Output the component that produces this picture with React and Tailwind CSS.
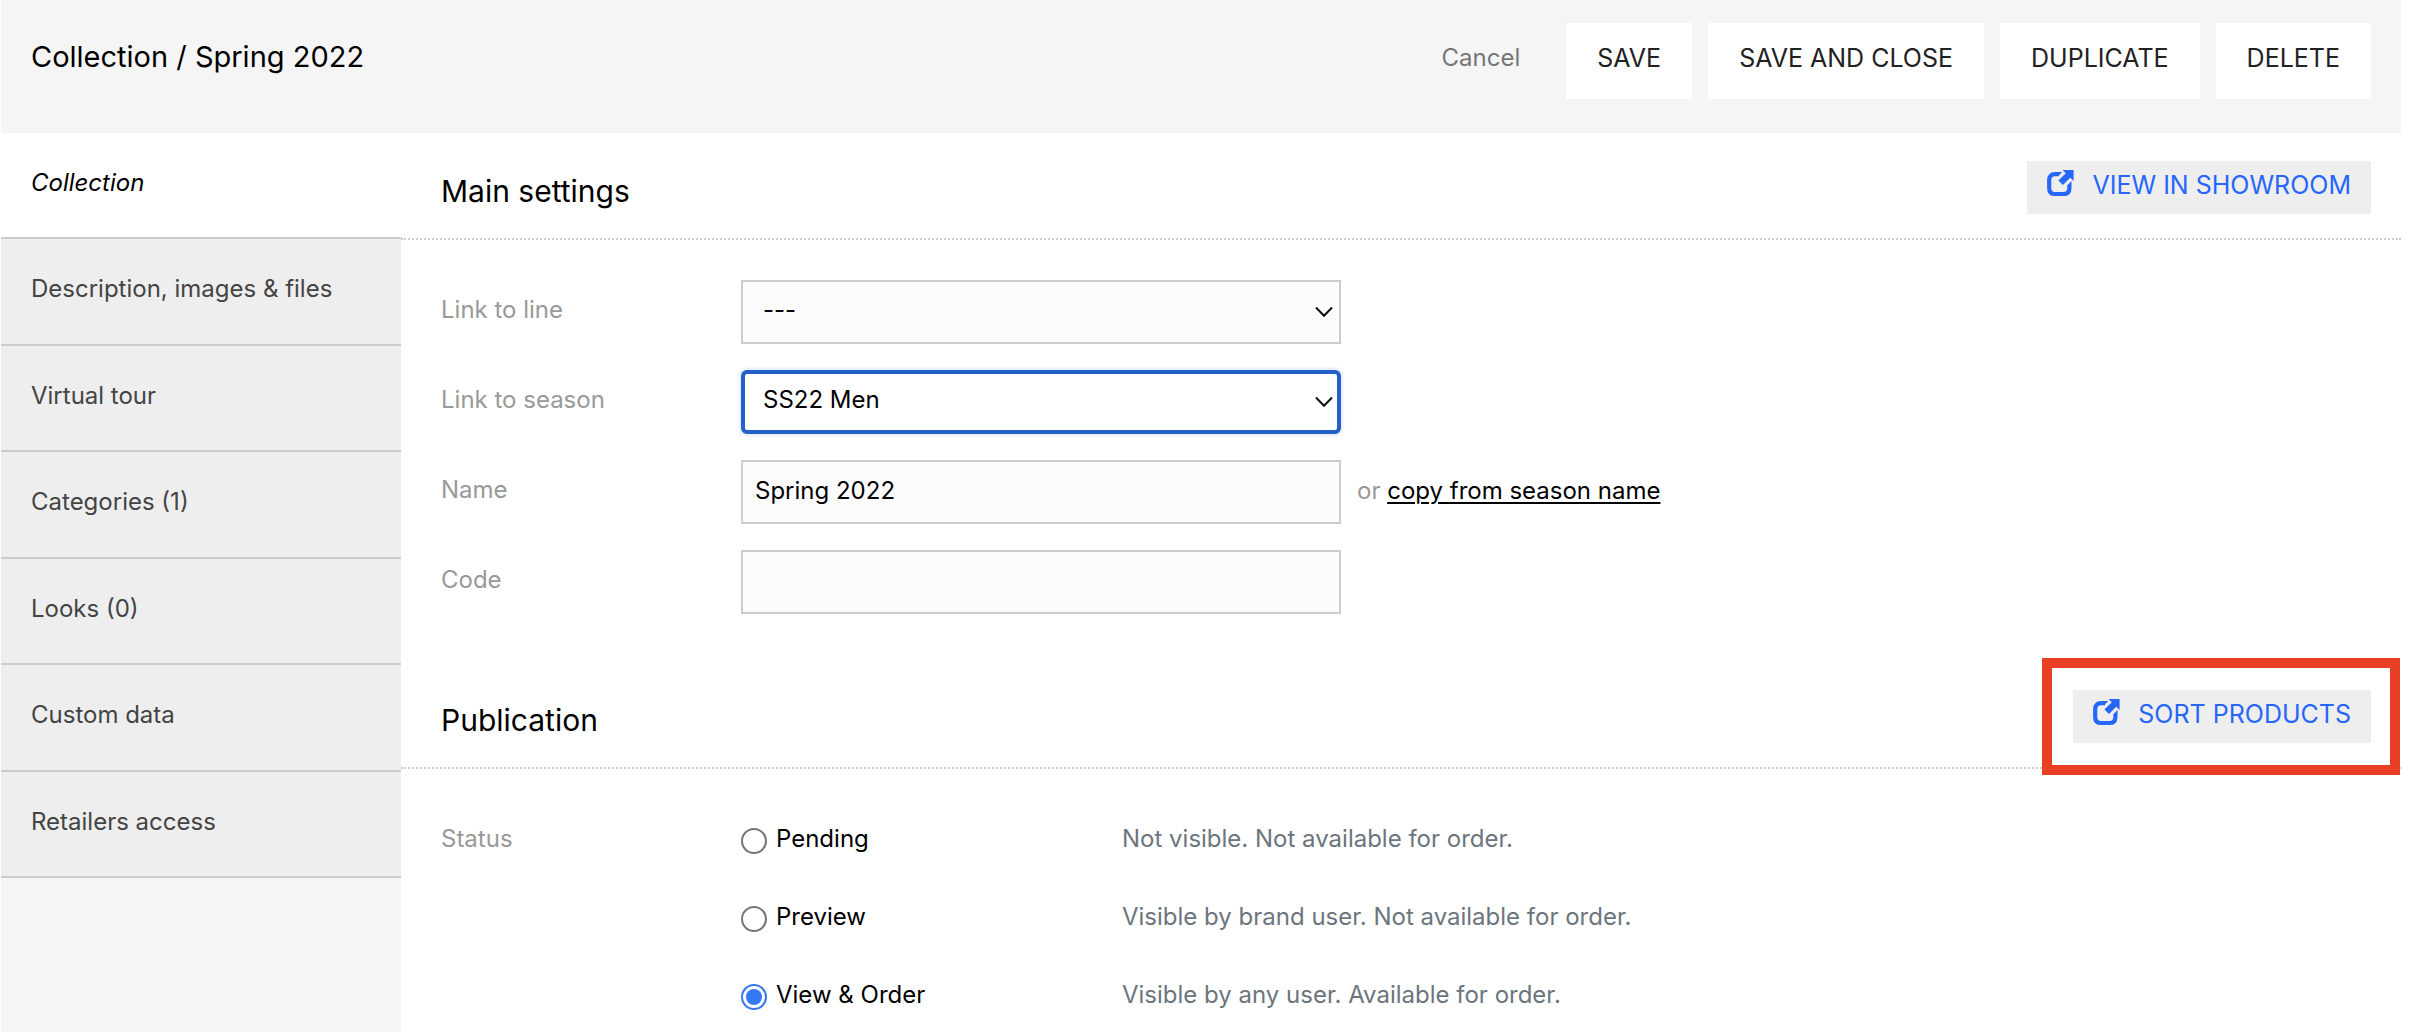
import React, { useState } from "react";

const NAV_ITEMS = [
  "Description, images & files",
  "Virtual tour",
  "Categories (1)",
  "Looks (0)",
  "Custom data",
  "Retailers access",
];

const STATUSES = [
  { id: "pending", label: "Pending", note: "Not visible. Not available for order." },
  { id: "preview", label: "Preview", note: "Visible by brand user. Not available for order." },
  { id: "order", label: "View & Order", note: "Visible by any user. Available for order." },
];

function ExternalIcon() {
  return (
    <svg viewBox="0 0 27 27" className="mb-1 size-[27px] shrink-0" aria-hidden="true">
      <path
        d="M12 4.2H8Q2.2 4.2 2.2 10V18.2Q2.2 24 8 24H16.5Q22.4 24 22.4 18.2V15"
        fill="none"
        stroke="currentColor"
        strokeWidth="4.2"
      />
      <path d="M12 2.1H15.2L11.2 6.3ZM20.3 15.2L24.5 11V15.2Z" fill="currentColor" />
      <path d="M15.5 0H26.6V11.1L23.2 7.8L16 15.1L11.4 10.5L18.8 3.3Z" fill="currentColor" />
    </svg>
  );
}

function Chevron() {
  return (
    <svg
      viewBox="0 0 18 12"
      className="pointer-events-none absolute top-1/2 right-2 h-3 w-[18px] -translate-y-1/2"
      fill="none"
      stroke="#111"
      strokeWidth="2"
      aria-hidden="true"
    >
      <path d="M1 1.5L9 9.7L17 1.5" />
    </svg>
  );
}

function HeaderButton({ children }) {
  return (
    <button type="button" className="h-[76px] bg-white px-[31px] pb-[6px] text-[25px] text-[#222]">
      {children}
    </button>
  );
}

function LinkButton({ children }) {
  return (
    <a
      href="#"
      className="flex h-[53px] items-center gap-[18px] bg-[#eee] pr-5 pb-[5px] pl-5 text-[25px] text-[#2666fb]"
    >
      <ExternalIcon />
      <span>{children}</span>
    </a>
  );
}

function SectionHeader({ title, children }) {
  return (
    <div className="flex h-[107px] items-start justify-between border-b-2 border-dotted border-[#ccc] pt-7 pr-[30px] pl-10">
      <h2 className="mt-[10px] text-[30px] leading-10 text-black">{title}</h2>
      {children}
    </div>
  );
}

function Field({ id, label, children }) {
  return (
    <div className="grid grid-cols-[300px_1fr] items-center">
      <label htmlFor={id} className="pb-1 text-[#999]">
        {label}
      </label>
      <div className="flex items-center">{children}</div>
    </div>
  );
}

export default function App() {
  const [line, setLine] = useState("---");
  const [season, setSeason] = useState("SS22 Men");
  const [name, setName] = useState("Spring 2022");
  const [code, setCode] = useState("");
  const [status, setStatus] = useState("order");

  return (
    <div className="flex min-h-screen flex-col bg-white pr-[11px] pl-px font-['Inter',sans-serif] text-[24px] leading-8 text-black">
      <header className="flex h-[133px] items-start justify-between bg-[#f5f5f5] px-[30px] pt-[23px]">
        <h1 className="mt-[14px] text-[29px] leading-10">Collection / Spring 2022</h1>
        <div className="flex gap-4">
          <button type="button" className="h-[76px] px-[30px] pb-[6px] text-[#777]">
            Cancel
          </button>
          <HeaderButton>SAVE</HeaderButton>
          <HeaderButton>SAVE AND CLOSE</HeaderButton>
          <HeaderButton>DUPLICATE</HeaderButton>
          <HeaderButton>DELETE</HeaderButton>
        </div>
      </header>

      <div className="grid flex-1 grid-cols-[400px_1fr]">
        <nav className="bg-[#f5f5f5]">
          <a
            href="#"
            aria-current="page"
            className="flex h-[106px] items-center border-b-2 border-[#ccc] bg-white px-[30px] pb-1 italic"
          >
            Collection
          </a>
          <div className="grid h-[639px] grid-rows-6">
            {NAV_ITEMS.map((item) => (
              <a
                key={item}
                href="#"
                className="flex items-center border-b-2 border-[#ccc] bg-[#eee] px-[30px] pb-1 text-[#444]"
              >
                {item}
              </a>
            ))}
          </div>
        </nav>

        <main>
          <section>
            <SectionHeader title="Main settings">
              <LinkButton>VIEW IN SHOWROOM</LinkButton>
            </SectionHeader>
            <div className="flex flex-col gap-[26px] pt-10 pb-12 pl-10">
              <Field id="line" label="Link to line">
                <div className="relative w-[600px]">
                  <select
                    id="line"
                    value={line}
                    onChange={(e) => setLine(e.target.value)}
                    className="block h-16 w-full appearance-none border-2 border-[#ccc] bg-[#fcfcfc] pb-1 pl-5 outline-none"
                  >
                    <option>---</option>
                  </select>
                  <Chevron />
                </div>
              </Field>
              <Field id="season" label="Link to season">
                <div className="relative w-[600px]">
                  <select
                    id="season"
                    value={season}
                    onChange={(e) => setSeason(e.target.value)}
                    className="block h-16 w-full appearance-none rounded-md border-4 border-[#2560c8] bg-white pb-1 pl-[18px] shadow-[0_0_3px_2px_#e3ebfd] outline-none"
                  >
                    <option>SS22 Men</option>
                  </select>
                  <Chevron />
                </div>
              </Field>
              <Field id="name" label="Name">
                <input
                  id="name"
                  type="text"
                  value={name}
                  onChange={(e) => setName(e.target.value)}
                  className="h-16 w-[600px] border-2 border-[#ccc] bg-[#fcfcfc] pb-1 pl-3 outline-none"
                />
                <p className="pb-[2px] pl-4 text-[#999]">
                  or{" "}
                  <a href="#" className="text-black underline decoration-2 underline-offset-[3px]">
                    copy from season name
                  </a>
                </p>
              </Field>
              <Field id="code" label="Code">
                <input
                  id="code"
                  type="text"
                  value={code}
                  onChange={(e) => setCode(e.target.value)}
                  className="h-16 w-[600px] border-2 border-[#ccc] bg-[#fcfcfc] pb-1 pl-3 outline-none"
                />
              </Field>
            </div>
          </section>

          <section>
            <SectionHeader title="Publication">
              <div className="relative">
                <LinkButton>SORT PRODUCTS</LinkButton>
                <span className="pointer-events-none absolute -inset-y-8 -right-[29px] -left-[31px] border-10 border-[#e94025]" />
              </div>
            </SectionHeader>
            <fieldset className="grid grid-cols-[300px_1fr] pt-[52px] pl-10" aria-labelledby="status-label">
              <span id="status-label" className="flex h-10 items-center pb-1 text-[#999]">
                Status
              </span>
              <div className="flex flex-col gap-[38px]">
                {STATUSES.map((s) => (
                  <div key={s.id} className="grid h-10 grid-cols-[381px_1fr] items-center">
                    <div className="flex items-center gap-[9px]">
                      <input
                        id={s.id}
                        type="radio"
                        name="status"
                        checked={status === s.id}
                        onChange={() => setStatus(s.id)}
                        className="size-[26px] appearance-none rounded-full border-2 border-[#767676] bg-white bg-clip-content p-[3px] checked:border-[#3478f6] checked:bg-[#3478f6]"
                      />
                      <label htmlFor={s.id} className="pb-1">
                        {s.label}
                      </label>
                    </div>
                    <p className="pb-1 text-[#6c757d]">{s.note}</p>
                  </div>
                ))}
              </div>
            </fieldset>
          </section>
        </main>
      </div>
    </div>
  );
}
